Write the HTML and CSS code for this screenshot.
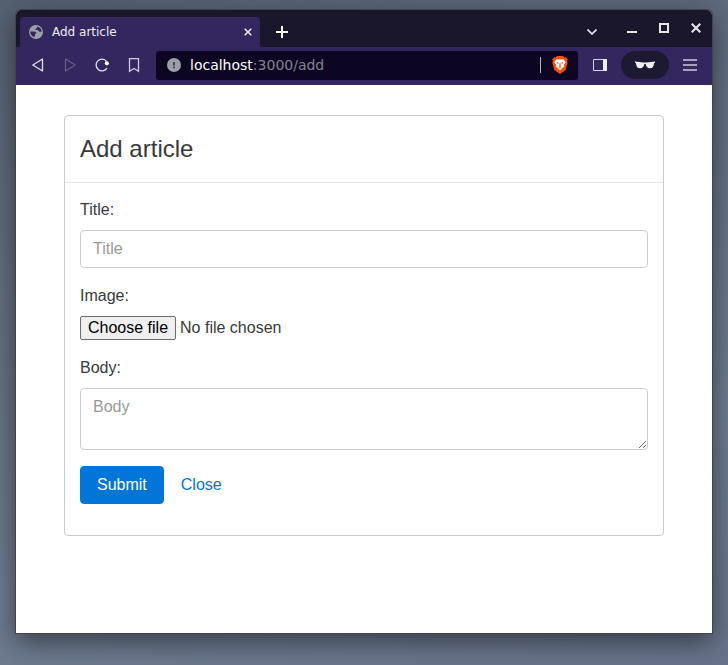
FILE: index.html
```html
<!DOCTYPE html>
<html lang="en">
<head>
<meta charset="utf-8">
<title>Add article</title>
<link rel="stylesheet" href="styles.css">
</head>
<body>
<div class="window">
  <header class="titlebar">
    <div class="tab">
      <svg width="14" height="14" viewBox="0 0 14 14" aria-hidden="true"><circle cx="7" cy="7" r="7" fill="#9aa0a6"/><path d="M1.200 6.500h3.600c1.600 0 2.700.9 2.700 2.300H6v1.800c0 .8-.6 1.300-1.400 1.300C2.600 11 1.200 9 1.200 6.500zM8.200 1.400c.3 1.100-.5 2-1.600 2v1.700h1.900c.9 0 .9 1.600 1.900 1.600h2.300C12.700 4 10.900 1.900 8.200 1.400z" fill="#34265f"/></svg>
      <span class="tab-title">Add article</span>
      <button class="plain tab-close" aria-label="Close tab"><svg width="8" height="8" viewBox="0 0 8 8"><path d="M.7.7l6.600 6.600M7.300.7L.7 7.300" stroke="#f0eff4" stroke-width="1.500"/></svg></button>
    </div>
    <button class="plain new-tab" aria-label="New tab"><svg width="12" height="12" viewBox="0 0 12 12"><path d="M6 0v12M0 6h12" stroke="#fff" stroke-width="2"/></svg></button>
    <div class="window-controls">
      <button class="plain tab-search" aria-label="Search tabs"><svg width="10" height="6" viewBox="0 0 10 6"><path d="M.5.5L5 5 9.500.5" fill="none" stroke="#e6e5ea" stroke-width="1.700"/></svg></button>
      <button class="plain" aria-label="Minimize"><svg width="10" height="10" viewBox="0 0 10 10"><path d="M0 9h10" stroke="#e6e5ea" stroke-width="2"/></svg></button>
      <button class="plain" aria-label="Maximize"><svg width="10" height="10" viewBox="0 0 10 10"><path d="M1 1h8v8H1z" fill="none" stroke="#e6e5ea" stroke-width="2"/></svg></button>
      <button class="plain" aria-label="Close window"><svg width="10" height="10" viewBox="0 0 10 10"><path d="M.7.7l8.600 8.600M9.300.7L.7 9.300" stroke="#e6e5ea" stroke-width="2"/></svg></button>
    </div>
  </header>
  <nav class="toolbar">
    <button class="plain tool" aria-label="Back"><svg width="16" height="16" viewBox="0 0 16 16"><path d="M12.500 2v12L2.800 8z" fill="none" stroke="#e1dfe8" stroke-width="1.300" stroke-linejoin="round"/></svg></button>
    <button class="plain tool" aria-label="Forward" disabled><svg width="16" height="16" viewBox="0 0 16 16"><path d="M3.500 2v12l9.700-6z" fill="none" stroke="#655a88" stroke-width="1.300" stroke-linejoin="round"/></svg></button>
    <button class="plain tool" aria-label="Reload"><svg width="16" height="16" viewBox="0 0 16 16"><path d="M13 11.200A5.900 5.900 0 1 1 12.600 4.300" fill="none" stroke="#e1dfe8" stroke-width="1.300"/><circle cx="12.800" cy="6.300" r="2" fill="#fff"/><path d="M11.500 4.500L15 6.500l-2 2z" fill="#fff"/></svg></button>
    <button class="plain tool" aria-label="Bookmark"><svg width="16" height="16" viewBox="0 0 16 16"><path d="M3.500 1.700h9v12.600L8 11.500l-4.500 2.800z" fill="none" stroke="#cfcbd9" stroke-width="1.300"/></svg></button>
    <div class="address">
      <svg width="14" height="14" viewBox="0 0 14 14" aria-hidden="true"><circle cx="7" cy="7" r="7" fill="#9aa0a6"/><path d="M7 4v3.500M7 8.500v1.800" stroke="#373542" stroke-width="1.700"/></svg>
      <span class="url"><span class="host">localhost</span>:3000/add</span>
      <span class="divider"></span>
      <button class="plain shield" aria-label="Shields"><svg width="16" height="18" viewBox="0 0 16 18"><path d="M5 0h6l1.500 1.500 1.500-.2 1.700 2.200-.6 1.500.6 1.500-2 7.500L8 18l-5.700-4L.3 6.500.9 5 .3 3.500 2 1.300l1.500.2z" fill="#fb4d0a"/><path d="M4.500 3.200l3.500.4 3.500-.4 2.200 3-2 3.300.3 1.600-2.300 1.400L8 14.600l-1.700-2.100L4 11.100l.3-1.600-2-3.300z" fill="#fff"/><path d="M4.300 6l2.500.5-.8 1.400zM11.700 6l-2.500.5.8 1.400zM7.600 7h.8l.4 2.700L8 10.500l-.8-.8zM6 11l2-.6 2 .6-2 1.100z" fill="#fb4d0a"/></svg></button>
    </div>
    <button class="plain tool" aria-label="Sidebar"><svg width="14" height="12" viewBox="0 0 14 12"><path d="M.5.5h13v11H.5z" fill="none" stroke="#d8d5e1"/><path d="M10 0h4v12h-4z" fill="#eee"/></svg></button>
    <button class="plain private" aria-label="Private profile"><svg width="20" height="8" viewBox="0 0 20 8"><path d="M0 .4L8.500 1.400h3L20 .4v1.300l-1 .6c-.3 3.400-1.300 5-4 5-2.600 0-4-1.700-4.300-4.200H9.300C9 5.600 7.600 7.300 5 7.300c-2.700 0-3.700-1.600-4-5l-1-.6z" fill="#eeeef0"/></svg></button>
    <button class="plain tool" aria-label="Menu"><svg width="14" height="12" viewBox="0 0 14 12"><path d="M0 1h14M0 6h14M0 11h14" stroke="#cfcbd9" stroke-width="1.300"/></svg></button>
  </nav>
  <main class="page">
    <form class="card">
      <div class="card-header"><h1>Add article</h1></div>
      <div class="card-block">
        <div class="form-group">
          <label for="title">Title:</label>
          <input class="form-control" id="title" type="text" placeholder="Title">
        </div>
        <div class="form-group">
          <label for="image">Image:</label>
          <div class="file-field">
            <input class="file-input" id="image" type="file">
            <label class="file-button" for="image">Choose file</label>
            <span>No file chosen</span>
          </div>
        </div>
        <div class="form-group">
          <label for="body">Body:</label>
          <textarea class="form-control" id="body" rows="2" placeholder="Body"></textarea>
        </div>
        <div class="form-group actions">
          <button class="btn btn-primary" type="submit">Submit</button>
          <a class="btn btn-link" href="#">Close</a>
        </div>
      </div>
    </form>
  </main>
</div>
</body>
</html>
```
FILE: styles.css
```css
* { box-sizing: border-box; }

body {
  margin: 0;
  min-height: 100vh;
  display: flex;
  padding: 10px 16px 32px;
  background: linear-gradient(165deg, #566172, #626d80 30%, #707c91 70%, #68738a);
  color: #373a3c;
  font: 16px/24px "Liberation Sans", Arial, sans-serif;
}

.window {
  flex: 1;
  min-width: 0;
  display: flex;
  flex-direction: column;
  overflow: hidden;
  border-radius: 5px 5px 0 0;
  background: #fff;
  box-shadow: 0 0 0 1px #41444a, 0 8px 28px rgba(20, 24, 32, 0.65);
}

.plain {
  display: flex;
  align-items: center;
  justify-content: center;
  padding: 0;
  border: 0;
  background: none;
}

.titlebar {
  display: flex;
  height: 37px;
  padding: 7px 4px 0;
  background: #1a172d;
}

.tab {
  display: flex;
  align-items: center;
  width: 240px;
  padding: 0 8px 0 9px;
  border-radius: 4px 4px 0 0;
  background: #34265f;
  color: #eeecf3;
  font: 12px/16px "DejaVu Sans", sans-serif;
}

.tab-title { margin-left: 9px; }
.tab-close { margin-left: auto; }
.new-tab { width: 44px; }

.window-controls {
  display: flex;
  align-items: center;
  margin-left: auto;
  padding: 0 7px 8px 0;
  gap: 22px;
}

.tab-search {
  margin-right: 8px;
  padding-top: 8px;
}

.toolbar {
  display: flex;
  align-items: center;
  height: 38px;
  padding: 0 6px 2px;
  background: #34265f;
}

.tool {
  width: 32px;
  height: 32px;
}

.address {
  flex: 1;
  display: flex;
  align-items: center;
  height: 29px;
  margin: 0 6px;
  padding: 0 10px 0 11px;
  border-radius: 3px;
  background: #0c0623;
  color: #85828f;
  font: 14px/20px "DejaVu Sans", sans-serif;
}

.url { margin-left: 9px; }
.host { color: #fff; }

.divider {
  width: 1px;
  height: 16px;
  margin-left: auto;
  background: #bab7c3;
}

.shield { margin-left: 11px; }

.private {
  width: 48px;
  height: 28px;
  margin: 0 5px;
  border-radius: 14px;
  background: #1e1933;
}

.page {
  flex: 1;
  padding: 30px 48px;
}

.card {
  border: 1px solid #cacaca;
  border-radius: 4px;
}

.card-header {
  padding: 20px 15px;
  border-bottom: 1px solid #e5e5e5;
}

h1 {
  margin: 0;
  font-size: 24px;
  font-weight: 400;
  line-height: 26px;
}

.card-block { padding: 15px; }
.form-group { margin-bottom: 16px; }

.form-group > label {
  display: block;
  margin-bottom: 8px;
}

.form-control {
  display: block;
  width: 100%;
  padding: 6px 12px;
  border: 1px solid #ccc;
  border-radius: 4px;
  background: #fff;
  color: #55595c;
  font: inherit;
}

.form-control::placeholder { color: #999; }

.file-field {
  display: flex;
  gap: 4px;
}

.file-input {
  position: absolute;
  width: 1px;
  height: 1px;
  opacity: 0;
}

.file-button {
  padding: 0 7px;
  border: 1px solid #6b6b6b;
  border-radius: 2px;
  background: #efefef;
  color: #000;
  line-height: 22px;
}

.actions { display: flex; }

.btn {
  padding: 6px 16px;
  border: 1px solid transparent;
  border-radius: 4px;
  font: inherit;
  text-decoration: none;
}

.btn-primary {
  border-color: #0275d8;
  background: #0275d8;
  color: #fff;
}

.btn-link { color: #0275d8; }
```
